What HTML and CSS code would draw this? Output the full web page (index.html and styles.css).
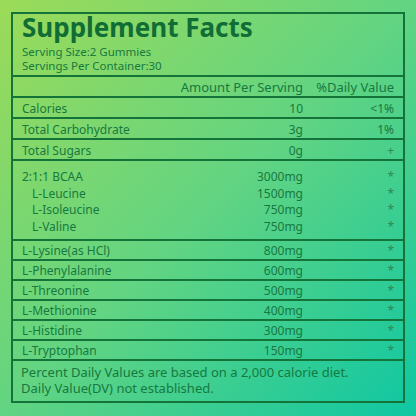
FILE: index.html
```html
<!DOCTYPE html>
<html lang="en">
<head>
    <meta charset="UTF-8">
    <title>Supplement Facts</title>
    <link rel="stylesheet" href="styles.css">
</head>
<body>
    <div class="label">
        <div class="label-head">
            <h1>Supplement Facts</h1>
            <div class="serving">Serving Size:2 Gummies</div>
            <div class="serving">Servings Per Container:30</div>
        </div>

        <div class="row row-title">
            <span></span>
            <span class="amount">Amount Per Serving</span>
            <span class="dv">%Daily Value</span>
        </div>

        <div class="row"><span>Calories</span><span class="amount">10</span><span class="dv">&lt;1%</span></div>
        <div class="row"><span>Total Carbohydrate</span><span class="amount">3g</span><span class="dv">1%</span></div>
        <div class="row"><span>Total Sugars</span><span class="amount">0g</span><span class="dv mark">+</span></div>

        <div class="group">
            <div class="line"><span>2:1:1 BCAA</span><span class="amount">3000mg</span><span class="dv mark">*</span></div>
            <div class="line sub"><span>L-Leucine</span><span class="amount">1500mg</span><span class="dv mark">*</span></div>
            <div class="line sub"><span>L-Isoleucine</span><span class="amount">750mg</span><span class="dv mark">*</span></div>
            <div class="line sub"><span>L-Valine</span><span class="amount">750mg</span><span class="dv mark">*</span></div>
        </div>

        <div class="row short"><span>L-Lysine(as HCl)</span><span class="amount">800mg</span><span class="dv mark">*</span></div>
        <div class="row short"><span>L-Phenylalanine</span><span class="amount">600mg</span><span class="dv mark">*</span></div>
        <div class="row short"><span>L-Threonine</span><span class="amount">500mg</span><span class="dv mark">*</span></div>
        <div class="row short"><span>L-Methionine</span><span class="amount">400mg</span><span class="dv mark">*</span></div>
        <div class="row short"><span>L-Histidine</span><span class="amount">300mg</span><span class="dv mark">*</span></div>
        <div class="row short"><span>L-Tryptophan</span><span class="amount">150mg</span><span class="dv mark">*</span></div>

        <div class="footnote">
            Percent Daily Values are based on a 2,000 calorie diet.<br>
            Daily Value(DV) not established.
        </div>
    </div>
</body>
</html>
```

FILE: styles.css
```css
html, body {
    margin: 0;
    padding: 0;
}

body {
    width: 416px;
    height: 416px;
    background: linear-gradient(135deg, #9cdb58 0%, #62d482 50%, #0ec7a3 100%);
    font-family: "Noto Sans", "Open Sans", sans-serif;
    color: #17793f;
    padding-top: 12px;
    box-sizing: border-box;
}

.label {
    margin-left: 11px;
    width: 394px;
    height: 391px;
    border: 2px solid #137338;
    box-sizing: border-box;
}

.label-head {
    padding: 0 9px;
    height: 63px;
    box-sizing: border-box;
    border-bottom: 2px solid #137338;
}

h1 {
    margin: 0;
    font-size: 26px;
    line-height: 26px;
    font-weight: 700;
    color: #106d35;
}

.serving {
    font-size: 11.5px;
    line-height: 14px;
}

.serving:first-of-type {
    margin-top: 5px;
}

.row,
.line {
    display: grid;
    grid-template-columns: 1fr auto 91px;
    align-items: center;
    padding: 0 9px;
    font-size: 12px;
    white-space: nowrap;
}

.row {
    height: 21px;
    padding-top: 1px;
    box-sizing: border-box;
    border-bottom: 2px solid #137338;
}

.row.short {
    height: 20px;
}

.row-title {
    height: 21px;
    font-size: 13px;
}

.amount {
    text-align: right;
}

.dv {
    text-align: right;
}

.mark {
    color: #2b8a52;
}

.group {
    height: 80px;
    box-sizing: border-box;
    padding-top: 7px;
    border-bottom: 2px solid #137338;
}

.line {
    height: 16.5px;
}

.line.sub span:first-child {
    padding-left: 10px;
}

.footnote {
    padding: 3px 8px 0;
    font-size: 13px;
    line-height: 16px;
}
```
